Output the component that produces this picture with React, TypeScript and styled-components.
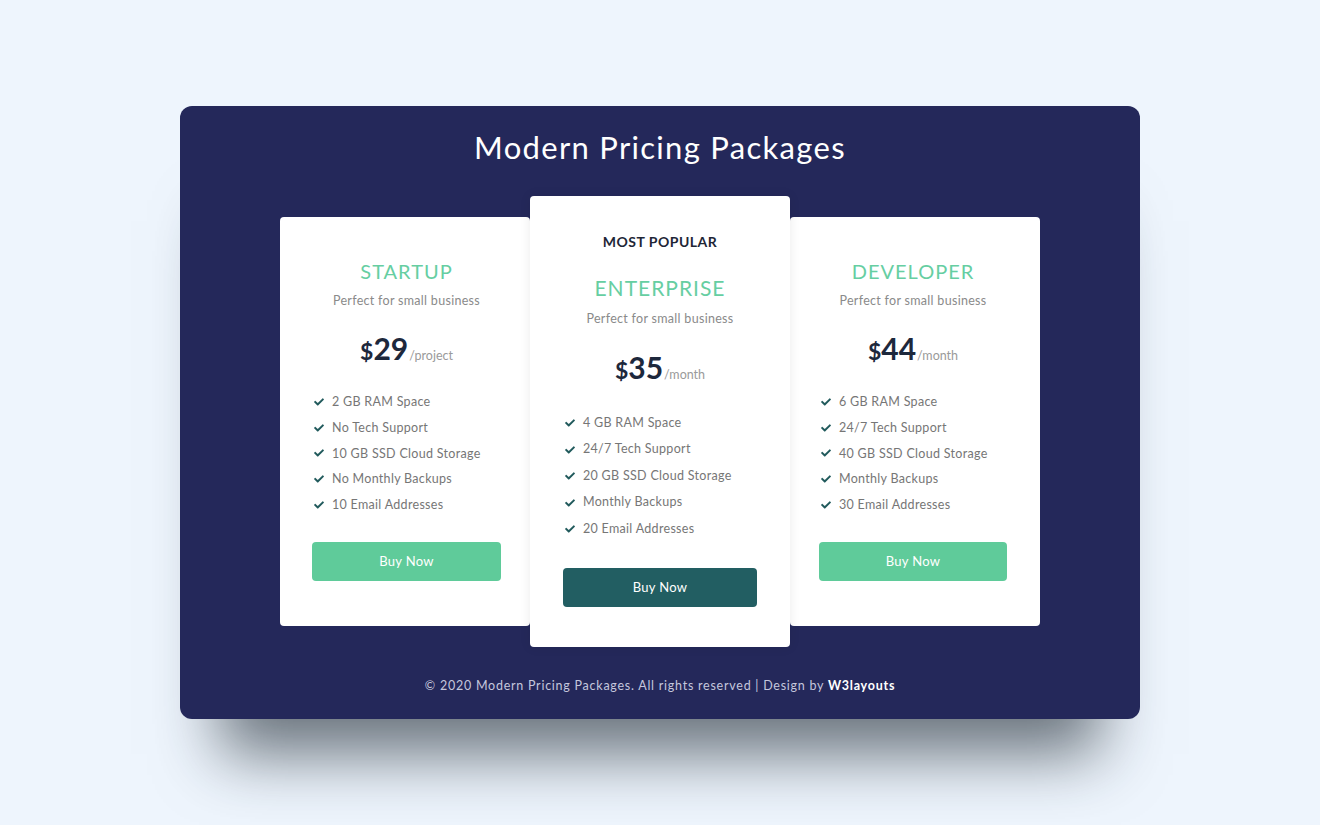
import React from "react";
import styled, { createGlobalStyle } from "styled-components";

const GlobalStyle = createGlobalStyle`
  * { box-sizing: border-box; }
  html, body { margin: 0; padding: 0; }
  body {
    background: #eef5fd;
    font-family: "Lato", "Noto Sans", sans-serif;
  }
`;

const Page = styled.div`
  min-height: 825px;
  display: flex;
  align-items: center;
  justify-content: center;
`;

const Panel = styled.section`
  width: 960px;
  background: #24285a;
  border-radius: 12px;
  padding: 23px 0 23px;
  display: flex;
  flex-direction: column;
  align-items: center;
  box-shadow: 0 75px 60px -40px rgba(25, 35, 45, 0.62);
`;

const Title = styled.h1`
  margin: 0;
  font-size: 31px;
  line-height: 36px;
  font-weight: 400;
  color: #ffffff;
  letter-spacing: 1.3px;
`;

const Row = styled.div`
  margin-top: 31px;
  display: flex;
  align-items: center;
`;

const cardPadding = (featured?: boolean, side?: "left" | "right") => {
  if (featured) return "37px 33px 40px";
  if (side === "left") return "42px 29px 45px 32px";
  return "42px 33px 45px 29px";
};

const Card = styled.div<{ $featured?: boolean; $side?: "left" | "right" }>`
  width: ${(p) => (p.$featured ? 260 : 250)}px;
  background: #ffffff;
  border-radius: 4px;
  padding: ${(p) => cardPadding(p.$featured, p.$side)};
  display: flex;
  flex-direction: column;
  align-items: center;
  position: relative;
  z-index: ${(p) => (p.$featured ? 1 : 0)};
  box-shadow: ${(p) => (p.$featured ? "0 0 12px rgba(0,0,0,0.08)" : "none")};
`;

const Popular = styled.div`
  font-size: 14px;
  line-height: 18px;
  font-weight: 700;
  color: #1e2636;
  letter-spacing: 0.5px;
  margin-bottom: 24px;
`;

const PlanName = styled.h2<{ $featured?: boolean }>`
  margin: 0;
  font-size: ${(p) => (p.$featured ? 21 : 20)}px;
  line-height: ${(p) => (p.$featured ? 26 : 24)}px;
  font-weight: 400;
  color: #66cea2;
  letter-spacing: 1px;
`;

const Sub = styled.p`
  margin: 9px 0 0;
  font-size: 12.5px;
  line-height: 18px;
  color: #8a8a8a;
  letter-spacing: 0.3px;
`;

const Price = styled.div<{ $featured?: boolean }>`
  margin-top: ${(p) => (p.$featured ? 22 : 21)}px;
  margin-bottom: 2px;
  height: 34px;
  display: flex;
  align-items: baseline;
  color: #1d283c;
  font-weight: 700;
`;

const Dollar = styled.span`
  font-size: 23px;
`;

const Amount = styled.span`
  font-size: 30px;
  line-height: 34px;
`;

const Per = styled.span`
  font-size: 12.5px;
  font-weight: 400;
  color: #9a9a9a;
  margin-left: 1px;
`;

const Features = styled.ul<{ $featured?: boolean }>`
  list-style: none;
  margin: ${(p) => (p.$featured ? 23.5 : 22)}px 0 0;
  padding: 0;
  align-self: stretch;
  li {
    line-height: ${(p) => (p.$featured ? 26.5 : 25.8)}px;
  }
`;

const Feature = styled.li`
  display: flex;
  align-items: center;
  gap: 8px;
  padding-left: 2px;
  font-size: 12.5px;
  color: #767676;
  letter-spacing: 0.3px;
`;

const Check = styled.svg`
  width: 10px;
  height: 10px;
  flex: none;
  color: #215a5c;
`;

const BuyButton = styled.button<{ $featured?: boolean }>`
  margin-top: ${(p) => (p.$featured ? 25.5 : 24)}px;
  align-self: stretch;
  height: 39px;
  border: none;
  border-radius: 4px;
  background: ${(p) => (p.$featured ? "#225e62" : "#5fcb9a")};
  color: #ffffff;
  font-family: inherit;
  font-size: 13px;
  letter-spacing: 0.3px;
  cursor: pointer;
`;

const Footer = styled.p`
  margin: 29px 0 0;
  font-size: 12.5px;
  line-height: 20px;
  color: #c4c7dd;
  letter-spacing: 0.75px;
  b {
    color: #ffffff;
    font-weight: 700;
  }
`;

const CheckIcon = () => (
  <Check viewBox="0 0 512 512" aria-hidden="true">
    <path
      fill="currentColor"
      d="M173.9 439.4l-166.4-166.4c-10-10-10-26.2 0-36.2l36.2-36.2c10-10 26.2-10 36.2 0L192 312.7 432.1 72.6c10-10 26.2-10 36.2 0l36.2 36.2c10 10 10 26.2 0 36.2l-294.4 294.4c-10 10-26.2 10-36.2 0z"
    />
  </Check>
);

type Plan = {
  name: string;
  price: string;
  per: string;
  features: string[];
  featured?: boolean;
  side?: "left" | "right";
};

const plans: Plan[] = [
  {
    name: "STARTUP",
    price: "29",
    per: "/project",
    side: "left",
    features: [
      "2 GB RAM Space",
      "No Tech Support",
      "10 GB SSD Cloud Storage",
      "No Monthly Backups",
      "10 Email Addresses",
    ],
  },
  {
    name: "ENTERPRISE",
    price: "35",
    per: "/month",
    featured: true,
    features: [
      "4 GB RAM Space",
      "24/7 Tech Support",
      "20 GB SSD Cloud Storage",
      "Monthly Backups",
      "20 Email Addresses",
    ],
  },
  {
    name: "DEVELOPER",
    price: "44",
    per: "/month",
    side: "right",
    features: [
      "6 GB RAM Space",
      "24/7 Tech Support",
      "40 GB SSD Cloud Storage",
      "Monthly Backups",
      "30 Email Addresses",
    ],
  },
];

export default function App() {
  return (
    <>
      <GlobalStyle />
      <Page>
        <Panel>
          <Title>Modern Pricing Packages</Title>
          <Row>
            {plans.map((p) => (
              <Card key={p.name} $featured={p.featured} $side={p.side}>
                {p.featured && <Popular>MOST POPULAR</Popular>}
                <PlanName $featured={p.featured}>{p.name}</PlanName>
                <Sub>Perfect for small business</Sub>
                <Price $featured={p.featured}>
                  <Dollar>$</Dollar>
                  <Amount>{p.price}</Amount>
                  <Per>{p.per}</Per>
                </Price>
                <Features $featured={p.featured}>
                  {p.features.map((f) => (
                    <Feature key={f}>
                      <CheckIcon />
                      {f}
                    </Feature>
                  ))}
                </Features>
                <BuyButton $featured={p.featured}>Buy Now</BuyButton>
              </Card>
            ))}
          </Row>
          <Footer>
            © 2020 Modern Pricing Packages. All rights reserved | Design by{" "}
            <b>W3layouts</b>
          </Footer>
        </Panel>
      </Page>
    </>
  );
}
